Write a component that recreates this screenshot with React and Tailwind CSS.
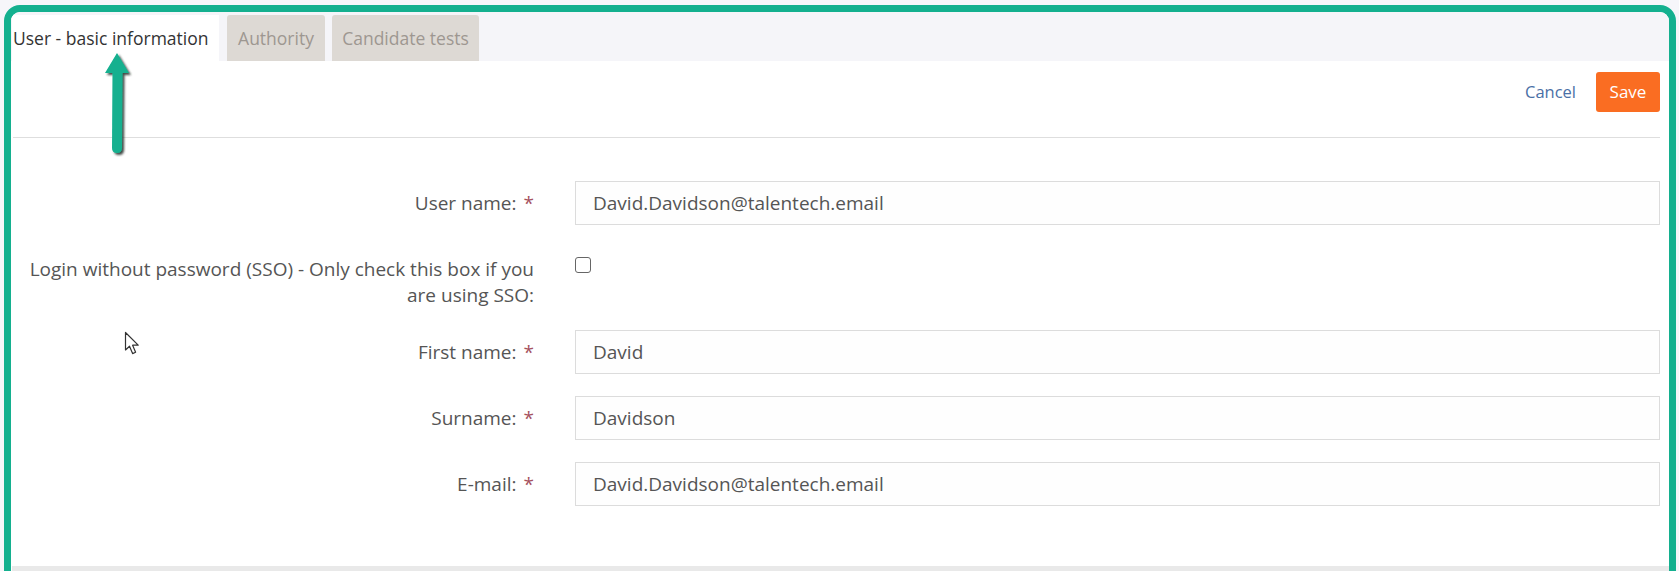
import React from "react";

const font = { fontFamily: '"Open Sans", "Noto Sans", Arial, sans-serif' };

function Req() {
  return <span className="text-[#a5525e] ml-[7px]">*</span>;
}

function InputRow({ label, value }) {
  return (
    <div className="flex items-center h-[44px]">
      <div className="w-[523px] shrink-0 text-right text-[19px] text-[#555]">
        {label}:<Req />
      </div>
      <div className="ml-[41px] w-[1085px] h-[44px] border border-[#dcdcdc] bg-[#fefefe] flex items-center pl-[17px] text-[19px] text-[#555]">
        {value}
      </div>
    </div>
  );
}

export default function App() {
  return (
    <div className="relative w-[1679px] h-[571px] overflow-hidden bg-[#f6f6fa]" style={font}>
      <div className="ml-[4px] mt-[5px] w-[1672px] h-[620px] border-[7px] border-[#14b08f] rounded-t-[16px] bg-white overflow-hidden">
        {/* tab strip */}
        <div className="flex items-end h-[49px] bg-[#f5f5f9] pl-[1px]">
          <div className="h-[46px] bg-white pl-[1px] pr-[8px] flex items-center text-[17.5px] text-[#333] w-[207px] whitespace-nowrap">
            User - basic information
          </div>
          <div className="ml-[8px] h-[46px] w-[98px] bg-[#ddd9d4] rounded-t-[3px] flex items-center justify-center text-[17.5px] text-[#9d9791]">
            Authority
          </div>
          <div className="ml-[7px] h-[46px] w-[147px] bg-[#ddd9d4] rounded-t-[3px] flex items-center justify-center text-[17.5px] text-[#9d9791] whitespace-nowrap">
            Candidate tests
          </div>
        </div>
        {/* header actions */}
        <div className="ml-[2px] mr-[9px] h-[77px] border-b border-[#dedede] flex justify-end items-start pt-[11px]">
          <button className="h-[40px] mr-[20px] text-[16.5px] text-[#4a70a6]">Cancel</button>
          <button className="h-[40px] w-[64px] rounded-[3px] bg-[#fa6d22] text-white text-[17px]">Save</button>
        </div>
        {/* form */}
        <div className="pt-[43px] flex flex-col gap-[22px]">
          <InputRow label="User name" value="David.Davidson@talentech.email" />
          <div className="flex h-[61px]">
            <div className="w-[523px] shrink-0 text-right text-[19px] leading-[26px] text-[#555] pt-[9px]">
              Login without password (SSO) - Only check this box if you
              <br />
              are using SSO:
            </div>
            <div className="ml-[41px] pt-[10px]">
              <div className="w-[16px] h-[16px] border border-[#666] rounded-[3px] bg-white" />
            </div>
          </div>
          <InputRow label="First name" value="David" />
          <InputRow label="Surname" value="Davidson" />
          <InputRow label="E-mail" value="David.Davidson@talentech.email" />
        </div>
        <div className="mt-[60px] ml-[1px] h-[6px] bg-[#e9e9e9]" />
      </div>

      {/* annotation arrow */}
      <svg className="absolute left-[96px] top-[48px]" width="44" height="112" viewBox="0 0 44 112">
        <defs>
          <filter id="sh" x="-50%" y="-20%" width="200%" height="140%">
            <feDropShadow dx="2" dy="2" stdDeviation="1.2" floodColor="#1d2a26" floodOpacity="0.85" />
          </filter>
        </defs>
        <path
          d="M21 5 L33 25 L26.5 25 L26 100 Q26 105 21 105 Q16 105 16 100 L16.5 25 L9 25 Z"
          fill="#14b08f"
          filter="url(#sh)"
          strokeLinejoin="round"
        />
      </svg>

      {/* mouse cursor */}
      <svg className="absolute left-[124px] top-[331px]" width="18" height="26" viewBox="0 0 18 26">
        <path
          d="M1.5 1.5 L1.5 19 L5.5 15.2 L8.6 22.6 L11.6 21.3 L8.6 14.2 L14.2 14.2 Z"
          fill="white"
          stroke="#333"
          strokeWidth="1.2"
          strokeLinejoin="round"
        />
      </svg>
    </div>
  );
}
